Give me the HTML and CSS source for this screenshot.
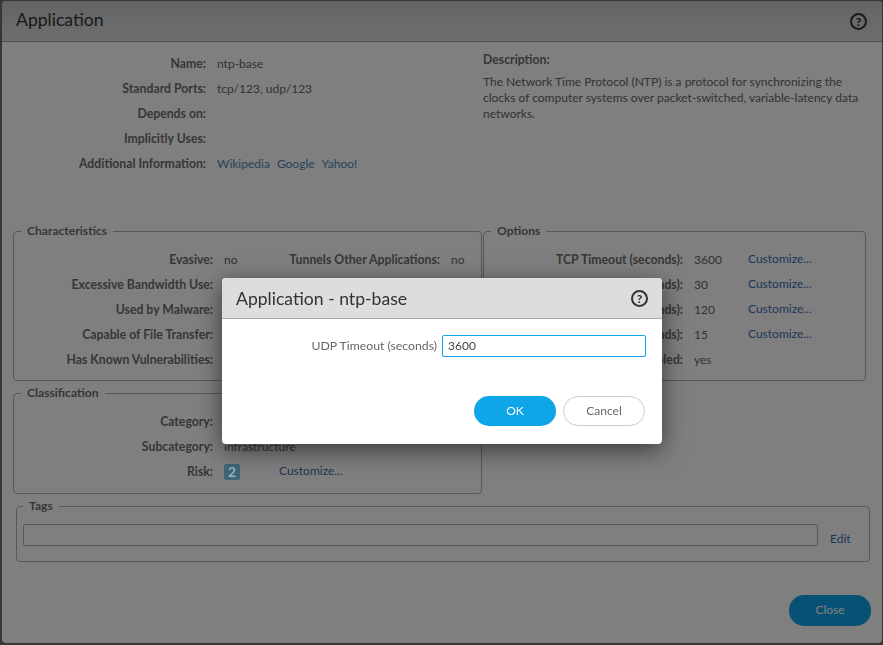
FILE: index.html
```html
<!DOCTYPE html>
<html>
<head>
<title>Application</title>
<meta name="viewport" content="width=device-width, initial-scale=1">
<link rel="stylesheet" href="styles.css">
</head>
<body>

<div class="window">
  <div class="win-header">
    <h1>Application</h1>
    <span class="help">?</span>
  </div>

  <div class="win-body">
    <div class="columns info">
      <div class="rows info-rows">
        <label>Name:</label><span>ntp-base</span>
        <label>Standard Ports:</label><span>tcp/123, udp/123</span>
        <label>Depends on:</label><span></span>
        <label>Implicitly Uses:</label><span></span>
        <label>Additional Information:</label>
        <span class="links"><a>Wikipedia</a><a>Google</a><a>Yahoo!</a></span>
      </div>
      <div class="description">
        <label>Description:</label>
        <p>The Network Time Protocol (NTP) is a protocol for synchronizing the clocks of computer systems over packet-switched, variable-latency data networks.</p>
      </div>
    </div>

    <div class="columns">
      <div class="stack">
        <fieldset class="chars">
          <legend>Characteristics</legend>
          <div class="rows four">
            <label>Evasive:</label><span>no</span><label>Tunnels Other Applications:</label><span>no</span>
            <label>Excessive Bandwidth Use:</label><span></span><label></label><span></span>
            <label>Used by Malware:</label><span></span><label></label><span></span>
            <label>Capable of File Transfer:</label><span></span><label></label><span></span>
            <label>Has Known Vulnerabilities:</label><span></span><label></label><span></span>
          </div>
        </fieldset>
        <fieldset class="classif">
          <legend>Classification</legend>
          <div class="rows three">
            <label>Category:</label><span></span><span></span>
            <label>Subcategory:</label><span>infrastructure</span><span></span>
            <label>Risk:</label><span><b class="risk">2</b></span><a class="custom">Customize...</a>
          </div>
        </fieldset>
      </div>

      <fieldset class="options">
        <legend>Options</legend>
        <div class="rows three">
          <label>TCP Timeout (seconds):</label><span>3600</span><a class="custom">Customize...</a>
          <label>UDP Timeout (seconds):</label><span>30</span><a class="custom">Customize...</a>
          <label>TCP Half Closed (seconds):</label><span>120</span><a class="custom">Customize...</a>
          <label>TCP Time Wait (seconds):</label><span>15</span><a class="custom">Customize...</a>
          <label>App-ID Enabled:</label><span>yes</span><span></span>
        </div>
      </fieldset>
    </div>

    <fieldset class="tags">
      <legend>Tags</legend>
      <div class="tags-row">
        <div class="tags-box"></div>
        <a class="custom">Edit</a>
      </div>
    </fieldset>

    <div class="win-footer">
      <button class="btn primary">Close</button>
    </div>
  </div>
</div>

<div class="overlay"></div>

<div class="dialog">
  <div class="dlg-header">
    <h2>Application - ntp-base</h2>
    <span class="help">?</span>
  </div>
  <div class="dlg-field">
    <label>UDP Timeout (seconds)</label>
    <input type="text" value="3600">
  </div>
  <div class="dlg-buttons">
    <button class="btn primary">OK</button>
    <button class="btn">Cancel</button>
  </div>
</div>

</body>
</html>
```

FILE: styles.css
```css
* {
  box-sizing: border-box;
}

html, body {
  height: 100%;
}

body {
  margin: 0;
  padding: 1px 1px 2px 2px;
  background-color: #6e6e6e;
  font-family: Lato, sans-serif;
  font-size: 12px;
  color: #666;
  overflow: hidden;
}

a {
  color: #4f84b0;
}

a.custom {
  color: #3a6cb0;
}

.window {
  height: 100%;
  background-color: #fff;
  border-radius: 4px;
  display: flex;
  flex-direction: column;
}

.win-header {
  height: 41px;
  flex: none;
  display: flex;
  align-items: center;
  justify-content: space-between;
  padding: 0 15px 4px 14px;
  background: linear-gradient(#c8c9cb, #dcdddf);
  border-bottom: 1px solid #999;
  border-radius: 4px 4px 0 0;
}

h1, h2 {
  margin: 0;
  font-size: 17.6px;
  font-weight: 400;
  color: #333;
}

.help {
  width: 17px;
  height: 17px;
  border: 2px solid #333;
  border-radius: 50%;
  display: flex;
  align-items: center;
  justify-content: center;
  font-size: 12px;
  font-weight: 900;
  color: #333;
}

.win-header .help {
  margin-top: 4px;
}

.win-body {
  flex: 1;
  display: flex;
  flex-direction: column;
  padding: 0 11px 17px;
}

.columns {
  display: grid;
  grid-template-columns: 469px 383px;
  column-gap: 1px;
  align-items: start;
}

.info {
  height: 181px;
  padding-top: 8px;
}

.rows {
  display: grid;
  grid-auto-rows: 25px;
  column-gap: 11px;
  align-items: center;
}

.rows label {
  padding-top: 2px;
  text-align: right;
}

.rows > span {
  padding-top: 2px;
}

label {
  font-size: 12.25px;
  font-weight: 700;
  color: #6e6e6e;
  white-space: nowrap;
}

.info-rows {
  grid-template-columns: 193px 1fr;
  align-content: start;
}

.links a {
  margin-right: 7px;
}

.description {
  margin-top: 2px;
}

.description label {
  display: block;
  line-height: 16px;
}

.description p {
  margin: 6px 0 0;
  line-height: 16px;
}

fieldset {
  margin: 0;
  padding: 7px 0 9px;
  border: 1px solid #b0b0b0;
  border-radius: 4px;
  min-width: 0;
}

legend {
  margin-left: 7px;
  padding: 0 6px;
  font-size: 12.1px;
  line-height: 16px;
  font-weight: 700;
  color: #6e6e6e;
}

.stack {
  display: flex;
  flex-direction: column;
  gap: 4px;
}

.four {
  grid-template-columns: 199px 40px 165px auto;
}

.three {
  grid-template-columns: 199px 44px auto;
}

.options .three {
  grid-template-columns: 199px 43px auto;
}

.classif {
  padding-bottom: 10px;
}

/* sits over the dimming layer, so these are the colours as seen */
.risk {
  position: relative;
  z-index: 2;
  display: block;
  width: 16px;
  height: 16px;
  margin-top: 1px;
  line-height: 16px;
  border-radius: 2px;
  background-color: #3f6678;
  font-size: 14px;
  color: #a4b2ba;
  text-align: center;
}

.tags {
  margin: 4px 0 0 3px;
  width: 854px;
  height: 64px;
  padding: 10px 6px;
}

.tags legend {
  margin-left: 0;
}

.tags-row {
  display: flex;
  align-items: center;
  gap: 12px;
}

.tags-box {
  width: 795px;
  height: 22px;
  border: 1px solid #b0b0b0;
  border-radius: 2px;
}

.tags-row a {
  padding-top: 6px;
}

.win-footer {
  margin-top: auto;
  display: flex;
  justify-content: flex-end;
}

.btn {
  width: 82px;
  height: 30px;
  padding-bottom: 3px;
  border: 1px solid #ccc;
  border-radius: 15px;
  background-color: #fff;
  font-family: Lato, sans-serif;
  font-size: 12px;
  color: #666;
}

.btn.primary {
  border: none;
  background-color: #0ea5e9;
  color: #fff;
}

.win-footer .btn {
  height: 31px;
}

.overlay {
  position: fixed;
  inset: 0;
  z-index: 1;
  background-color: rgba(0, 0, 0, 0.5);
}

.dialog {
  position: fixed;
  z-index: 3;
  left: 222px;
  top: 278px;
  width: 440px;
  height: 166px;
  background-color: #fff;
  border-radius: 4px;
  box-shadow: 0 6px 24px rgba(0, 0, 0, 0.55);
}

.dlg-header {
  height: 41px;
  display: flex;
  align-items: center;
  justify-content: space-between;
  padding: 0 14px;
  background-color: #dcdddf;
  border-bottom: 1px solid #aaa;
  border-radius: 4px 4px 0 0;
}

.dlg-field {
  display: flex;
  align-items: center;
  justify-content: flex-end;
  gap: 5px;
  margin-top: 16px;
  padding-right: 16px;
}

.dlg-field label {
  padding-bottom: 2px;
  font-weight: 400;
  color: #666;
}

.dlg-field input {
  width: 204px;
  height: 22px;
  padding: 0 5px 2px;
  border: 1px solid #0ea5e9;
  border-radius: 2px;
  font-family: Lato, sans-serif;
  font-size: 12px;
  color: #444;
  outline: none;
}

.dlg-buttons {
  display: flex;
  justify-content: flex-end;
  gap: 7px;
  margin-top: 39px;
  padding-right: 17px;
}
```
